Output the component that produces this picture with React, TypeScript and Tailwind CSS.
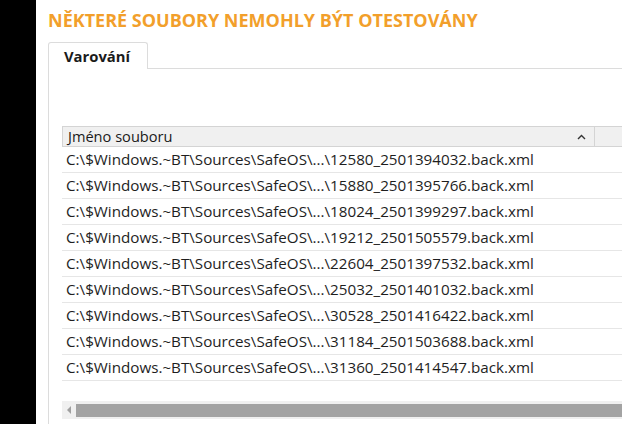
const rows = [
  "12580_2501394032",
  "15880_2501395766",
  "18024_2501399297",
  "19212_2501505579",
  "22604_2501397532",
  "25032_2501401032",
  "30528_2501416422",
  "31184_2501503688",
  "31360_2501414547",
];

export default function App() {
  return (
    <div className="flex w-[622px] h-[424px] overflow-hidden bg-white font-['Open_Sans',sans-serif]">
      {/* left dark strip */}
      <div className="w-[36px] shrink-0 bg-black" />

      <div className="flex flex-col flex-1 min-w-0 pl-[12px]">
        {/* Title */}
        <h1 className="pt-[8px] h-[42px] text-[18px] leading-[24px] font-bold text-[#f29f2b] whitespace-nowrap">
          NĚKTERÉ SOUBORY NEMOHLY BÝT OTESTOVÁNY
        </h1>

        {/* Tabs */}
        <div className="flex h-[27px]">
          <div className="w-[100px] shrink-0 border border-b-0 border-[#dcdcdc] rounded-t-[3px] bg-white pl-[15px] pt-[3px] text-[14.8px] leading-[20px] font-bold text-[#1a1a1a]">
            Varování
          </div>
          <div className="flex-1 border-b border-[#dcdcdc]" />
        </div>

        {/* Panel */}
        <div className="flex-1 border-l border-[#dcdcdc] pl-[13px] pt-[57px]">
          <div className="w-[620px] flex flex-col">
            {/* header */}
            <div className="flex h-[21px] bg-[#f0f0f0] border border-[#d4d4d4] text-[14.6px] leading-[19px] text-[#1a1a1a]">
              <div className="w-[532px] shrink-0 flex items-center justify-between pl-[5px] pr-[8px] border-r border-[#d4d4d4]">
                <span>Jméno souboru</span>
                <svg width="9" height="6" viewBox="0 0 9 6" className="mt-[1px]">
                  <path d="M1 5 L4.5 1.5 L8 5" fill="none" stroke="#333" strokeWidth="1.4" />
                </svg>
              </div>
              <div className="flex-1" />
            </div>

            {/* rows */}
            {rows.map((r) => (
              <div
                key={r}
                className="h-[26px] flex items-center pl-[4px] border-b border-[#e6e6e6] text-[15.2px] text-[#1e1e1e] whitespace-nowrap"
              >
                C:\$Windows.~BT\Sources\SafeOS\...\{r}.back.xml
              </div>
            ))}

            <div className="h-[20px]" />

            {/* horizontal scrollbar */}
            <div className="flex items-center h-[18px] bg-[#f0f0f0]">
              <div className="w-[14px] flex items-center justify-center">
                <svg width="5" height="8" viewBox="0 0 5 8">
                  <path d="M4 0 L0 4 L4 8 Z" fill="#a0a0a0" />
                </svg>
              </div>
              <div className="flex-1 h-[13px] bg-[#a3a3a3]" />
            </div>
          </div>
        </div>
      </div>
    </div>
  );
}
